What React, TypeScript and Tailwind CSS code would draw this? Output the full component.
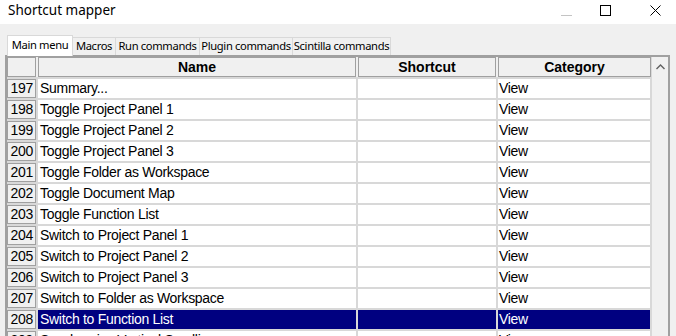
import React from "react";

const rows: { n: number; name: string; sel?: boolean }[] = [
  { n: 197, name: "Summary..." },
  { n: 198, name: "Toggle Project Panel 1" },
  { n: 199, name: "Toggle Project Panel 2" },
  { n: 200, name: "Toggle Project Panel 3" },
  { n: 201, name: "Toggle Folder as Workspace" },
  { n: 202, name: "Toggle Document Map" },
  { n: 203, name: "Toggle Function List" },
  { n: 204, name: "Switch to Project Panel 1" },
  { n: 205, name: "Switch to Project Panel 2" },
  { n: 206, name: "Switch to Project Panel 3" },
  { n: 207, name: "Switch to Folder as Workspace" },
  { n: 208, name: "Switch to Function List", sel: true },
  { n: 209, name: "Synchronize Vertical Scrolling" },
];

const tabs = [
  { label: "Main menu", w: "w-[66px]" },
  { label: "Macros", w: "w-[43px]" },
  { label: "Run commands", w: "w-[84px]" },
  { label: "Plugin commands", w: "w-[93px]" },
  { label: "Scintilla commands", w: "w-[98px]" },
];

export default function App() {
  return (
    <div className="w-[676px] h-[336px] overflow-hidden bg-[#f0f0f0] flex flex-col">
      {/* title bar */}
      <div className="h-[24px] bg-white flex items-center shrink-0">
        <div
          className="pl-[8px] -mt-[2px] text-[13.5px] text-black leading-none"
          style={{ fontFamily: '"Noto Sans", sans-serif' }}
        >
          Shortcut mapper
        </div>
        <div className="ml-auto flex items-center h-full">
          <svg width="12" height="12" viewBox="0 0 12 12" className="mr-[27px]">
            <line x1="0" y1="9.5" x2="11" y2="9.5" stroke="#c4c4c4" strokeWidth="1" />
          </svg>
          <svg width="12" height="12" viewBox="0 0 12 12" className="mr-[38px] -mt-[2px]">
            <rect x="0.5" y="0.5" width="10" height="10" fill="none" stroke="#000" strokeWidth="1" />
          </svg>
          <svg width="12" height="12" viewBox="0 0 12 12" className="mr-[14px] -mt-[2px]">
            <path d="M0.5 0.5 L10.5 10.5 M10.5 0.5 L0.5 10.5" stroke="#000" strokeWidth="1" />
          </svg>
        </div>
      </div>

      {/* tabs */}
      <div
        className="flex items-end pl-[7px] mt-[11px] h-[20px] shrink-0 text-[11.2px] tracking-[-0.35px] text-black whitespace-nowrap"
        style={{ fontFamily: '"Noto Sans", sans-serif' }}
      >
        {tabs.map((t, i) =>
          i === 0 ? (
            <div
              key={t.label}
              className={`${t.w} shrink-0 h-[21px] bg-white border border-b-0 border-[#d9d9d9] flex items-center justify-center pb-[2px] relative z-10 -mb-[1px] whitespace-nowrap`}
            >
              {t.label}
            </div>
          ) : (
            <div
              key={t.label}
              className={`${t.w} shrink-0 h-[18px] bg-[#f0f0f0] border border-l-0 border-b-0 border-[#d9d9d9] flex items-center justify-center whitespace-nowrap`}
            >
              {t.label}
            </div>
          )
        )}
      </div>

      {/* grid */}
      <div className="ml-[5px] w-[665px] flex-1 border-t-2 border-l-2 border-r-2 border-[#a0a0a0] overflow-hidden flex">
        <div
          className="w-[644px] flex flex-col bg-[#d8d8d8] gap-[2px]"
          style={{ fontFamily: '"Liberation Sans", Arial, sans-serif' }}
        >
          {/* header */}
          <div className="flex h-[20px] shrink-0 bg-[#f0f0f0] text-[14px] font-bold text-black">
            <div className="w-[29px] border border-[#a0a0a0] bg-[#f0f0f0]" />
            <div className="w-[2px] bg-[#f0f0f0]" />
            <div className="w-[318px] border border-[#a0a0a0] flex items-center justify-center">Name</div>
            <div className="w-[2px] bg-[#f0f0f0]" />
            <div className="w-[138px] border border-[#a0a0a0] flex items-center justify-center">Shortcut</div>
            <div className="w-[2px] bg-[#f0f0f0]" />
            <div className="w-[153px] border border-[#a0a0a0] flex items-center justify-center">Category</div>
          </div>
          {rows.map((r) => (
            <div key={r.n} className="flex h-[19px] gap-[2px] text-[14px] tracking-[-0.3px] shrink-0">
              <div className="w-[29px] bg-[#f0f0f0] border border-[#a0a0a0] flex items-center justify-end pr-[2px] text-black">
                {r.n}
              </div>
              <div
                className={`w-[318px] flex items-center pl-[2px] whitespace-nowrap ${
                  r.sel ? "bg-[#000080] text-white" : "bg-white text-black"
                }`}
              >
                {r.name}
              </div>
              <div className={`w-[138px] ${r.sel ? "bg-[#000080]" : "bg-white"}`} />
              <div
                className={`w-[152px] flex items-center pl-[1px] ${
                  r.sel ? "bg-[#000080] text-white" : "bg-white text-black"
                }`}
              >
                View
              </div>
            </div>
          ))}
        </div>
        {/* scrollbar */}
        <div className="w-[1px] bg-[#d8d8d8]" />
        <div className="flex-1 bg-[#f0f0f0] flex flex-col items-center pt-[7px]">
          <svg width="9" height="6" viewBox="0 0 9 6">
            <path d="M0.5 5 L4.5 1 L8.5 5" fill="none" stroke="#606060" strokeWidth="1.4" />
          </svg>
        </div>
      </div>
    </div>
  );
}
